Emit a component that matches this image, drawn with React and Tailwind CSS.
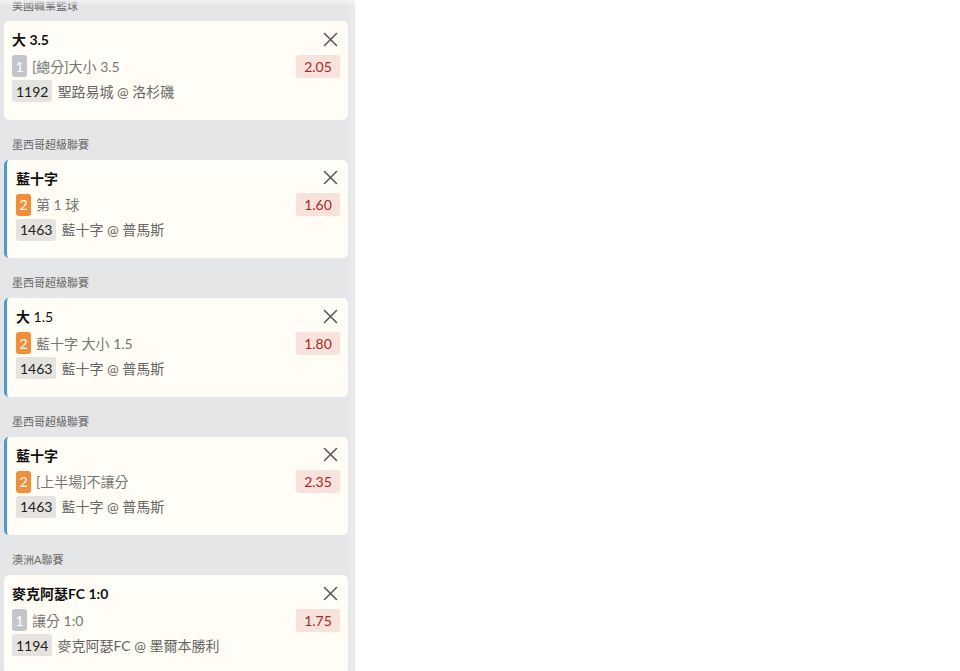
import React from "react";

const groups = [
  { league: "美國職業籃球", title: [["大", true], [" 3.5", true]], badge: "1", orange: false, bar: false, desc: "[總分]大小 3.5", odds: "2.05", code: "1192", match: "聖路易城 @ 洛杉磯" },
  { league: "墨西哥超級聯賽", title: [["藍十字", true]], badge: "2", orange: true, bar: true, desc: "第 1 球", odds: "1.60", code: "1463", match: "藍十字 @ 普馬斯" },
  { league: "墨西哥超級聯賽", title: [["大", true], [" 1.5", false]], badge: "2", orange: true, bar: true, desc: "藍十字 大小 1.5", odds: "1.80", code: "1463", match: "藍十字 @ 普馬斯" },
  { league: "墨西哥超級聯賽", title: [["藍十字", true]], badge: "2", orange: true, bar: true, desc: "[上半場]不讓分", odds: "2.35", code: "1463", match: "藍十字 @ 普馬斯" },
  { league: "澳洲A聯賽", title: [["麥克阿瑟FC 1:0", true]], badge: "1", orange: false, bar: false, desc: "讓分 1:0", odds: "1.75", code: "1194", match: "麥克阿瑟FC @ 墨爾本勝利" },
];

function CloseIcon() {
  return (
    <svg width="15" height="15" viewBox="0 0 15 15" className="block">
      <path d="M1.5 1.5 L13.5 13.5 M13.5 1.5 L1.5 13.5" stroke="#555" strokeWidth="1.5" strokeLinecap="round" />
    </svg>
  );
}

function Card({ g }) {
  return (
    <div
      className={
        "h-[98.5px] rounded-[5px] bg-[#fffdf5] pr-2 pt-[10px] " +
        (g.bar ? "border-l-[3px] border-[#4b9ad4] pl-[9px]" : "pl-2")
      }
    >
      <div className="flex h-[18px] items-center justify-between">
        <div className="text-[14px] leading-[18px] text-[#111]">
          {g.title.map(([t, b], i) => (
            <span key={i} className={b ? "font-bold" : "font-normal"}>{t}</span>
          ))}
        </div>
        <div className="mr-[2px] mt-[-2px]">
          <CloseIcon />
        </div>
      </div>
      <div className="mt-[5px] flex h-[24px] items-center justify-between">
        <div className="flex items-center">
          <span
            className={
              "flex h-[22px] w-[15px] items-center justify-center rounded-[3px] text-[14px] text-white " +
              (g.orange ? "bg-[#ef8f3a]" : "bg-[#c3c5cc]")
            }
          >
            {g.badge}
          </span>
          <span className="ml-[5px] text-[14px] text-[#777]">{g.desc}</span>
        </div>
        <span className="flex h-[23px] w-[44px] items-center justify-center rounded-[3px] bg-[#f8e3dc] text-[14px] text-[#a8282a]">
          {g.odds}
        </span>
      </div>
      <div className="mt-[1px] flex h-[24px] items-center">
        <span className="flex h-[22px] items-center rounded-[3px] bg-[#e4e3e0] px-[4px] text-[14px] text-[#222]">
          {g.code}
        </span>
        <span className="ml-[5px] text-[14px] text-[#666]">{g.match}</span>
      </div>
    </div>
  );
}

export default function App() {
  return (
    <div
      className="flex h-[671px] w-[960px] overflow-hidden bg-white"
      style={{ fontFamily: 'Lato, "Noto Sans CJK TC", sans-serif' }}
    >
      <div className="relative flex h-full w-[355px] bg-[#e5e6e8]">
        <div className="mt-[-19px] flex w-[349px] flex-col pl-1 pr-[1px]">
          {groups.map((g, i) => (
            <div key={i}>
              <div className="h-[40px] pl-2 pt-[18px]">
                <div className="text-[11px] leading-[14px] text-[#666]">{g.league}</div>
              </div>
              <Card g={g} />
            </div>
          ))}
        </div>
        <div className="h-full w-[6px] bg-[#e9eaec]" />
        <div className="pointer-events-none absolute left-0 top-0 h-[6px] w-full bg-gradient-to-b from-[#f2f3f4] to-transparent" />
      </div>
      <div className="flex-1" />
    </div>
  );
}
